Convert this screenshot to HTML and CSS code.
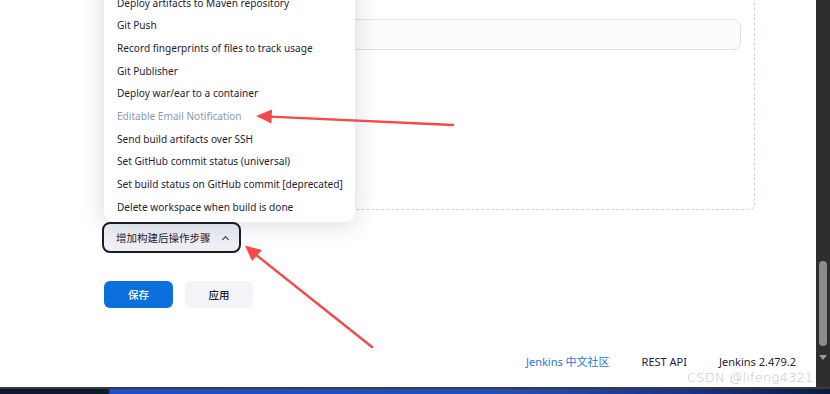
FILE: index.html
```html
<!DOCTYPE html>
<html lang="zh-CN">
<head>
    <meta charset="UTF-8">
    <meta name="viewport" content="width=device-width, initial-scale=1.0">
    <title>Jenkins - 构建后操作</title>
    <link rel="stylesheet" href="styles.css">
</head>
<body>
<div class="screen">
    <div class="window">
        <div class="page">

            <div class="post-build">
                <div class="field"></div>
            </div>

            <button class="add-step">增加构建后操作步骤 <span class="chevron"></span></button>

            <div class="actions">
                <button class="btn btn-primary">保存</button>
                <button class="btn btn-secondary">应用</button>
            </div>

            <footer class="page-footer">
                <a href="#" class="footer-link">Jenkins 中文社区</a>
                <span>REST API</span>
                <span>Jenkins 2.479.2</span>
            </footer>

            <!-- dropdown opened from the add button -->
            <ul class="menu">
                <li>Archive the artifacts</li>
                <li>Deploy artifacts to Maven repository</li>
                <li>Git Push</li>
                <li>Record fingerprints of files to track usage</li>
                <li>Git Publisher</li>
                <li>Deploy war/ear to a container</li>
                <li class="muted">Editable Email Notification</li>
                <li>Send build artifacts over SSH</li>
                <li>Set GitHub commit status (universal)</li>
                <li>Set build status on GitHub commit [deprecated]</li>
                <li>Delete workspace when build is done</li>
            </ul>

            <!-- annotation arrows -->
            <svg class="annotations" width="816" height="387" viewBox="0 0 816 387">
                <line x1="453" y1="125" x2="270" y2="116.6" stroke="#f44a4a" stroke-width="2.4" stroke-linecap="round"/>
                <polygon points="256,116 272,109.5 271.5,123.5" fill="#f44a4a"/>
                <line x1="372" y1="347" x2="255" y2="254" stroke="#f44a4a" stroke-width="2.4" stroke-linecap="round"/>
                <polygon points="245,245.5 262,250 252,261" fill="#f44a4a"/>
            </svg>

            <div class="watermark">CSDN @lifeng4321</div>
        </div>

        <div class="scrollbar">
            <div class="thumb"></div>
            <div class="arrow-down"></div>
        </div>
    </div>
    <div class="taskbar"></div>
</div>
</body>
</html>
```

FILE: styles.css
```css
body {
    margin: 0;
    padding: 0;
    font-family: 'Noto Sans', 'Noto Sans CJK SC', sans-serif;
    color: #1f2330;
    background-color: #fff;
}

.screen {
    width: 830px;
    height: 394px;
    display: flex;
    flex-direction: column;
    overflow: hidden;
}

.window {
    height: 387px;
    display: flex;
}

.page {
    position: relative;
    flex: 1;
    display: flex;
    flex-direction: column;
    align-items: flex-start;
    padding-left: 104px;
    background-color: #fff;
    overflow: hidden;
}

.post-build {
    box-sizing: border-box;
    width: 651px;
    height: 230px;
    margin-top: -20px;
    padding: 38px 13px 0 13px;
    border: 1px dashed #ccd4e2;
    border-radius: 6px;
}

.field {
    height: 31px;
    box-sizing: border-box;
    border: 1.5px solid #dde2eb;
    border-radius: 8px;
    background-color: #fcfcfd;
}

.add-step {
    margin: 12px 0 0 -2px;
    width: 139px;
    height: 31px;
    box-sizing: border-box;
    border: 2px solid #1c1d2b;
    border-radius: 8px;
    background-color: #eef0f5;
    color: #1f2330;
    font-family: inherit;
    font-size: 10.5px;
    padding: 0 0 0 12px;
    display: flex;
    align-items: center;
    gap: 9px;
}

.chevron {
    width: 4px;
    height: 4px;
    border-left: 1.5px solid #333;
    border-top: 1.5px solid #333;
    transform: rotate(45deg);
    margin-top: 3px;
    margin-left: 3px;
}

.actions {
    display: flex;
    gap: 12px;
    margin-top: 28px;
}

.btn {
    height: 27px;
    border: none;
    border-radius: 6px;
    font-family: inherit;
    font-size: 10.5px;
    font-weight: 500;
}

.btn-primary {
    width: 69px;
    background-color: #0b6fde;
    color: #fff;
}

.btn-secondary {
    width: 68px;
    background-color: #f3f4f7;
    color: #1f2330;
}

.page-footer {
    margin-top: auto;
    align-self: flex-end;
    display: flex;
    gap: 32px;
    padding: 0 20px 18px 0;
    font-size: 11px;
    line-height: 15px;
}

.footer-link {
    color: #1f78d6;
    text-decoration: none;
}

.menu {
    position: absolute;
    left: 104px;
    top: -35px;
    width: 251px;
    margin: 0;
    padding: 4px 0;
    list-style: none;
    background-color: #fff;
    border-radius: 10px;
    box-shadow: 0 2px 24px rgba(20, 25, 45, 0.17);
    font-size: 10.1px;
}

.menu li {
    height: 22.67px;
    line-height: 22.67px;
    padding-left: 13px;
    white-space: nowrap;
}

.menu li.muted {
    color: #8a9ab6;
}

.annotations {
    position: absolute;
    left: 0;
    top: 0;
    pointer-events: none;
}

.watermark {
    position: absolute;
    left: 687px;
    top: 370px;
    font-family: 'DejaVu Sans', sans-serif;
    font-weight: 200;
    font-size: 13px;
    line-height: 16px;
    color: #c4c4c4;
    letter-spacing: 0.2px;
    white-space: nowrap;
}

.scrollbar {
    width: 14px;
    background-color: #2e2e2e;
    display: flex;
    flex-direction: column;
    align-items: center;
}

.thumb {
    width: 8px;
    height: 85px;
    margin-top: 261px;
    border-radius: 4px;
    background-color: #8c8c8c;
}

.arrow-down {
    margin-top: 9px;
    width: 0;
    height: 0;
    border-left: 4px solid transparent;
    border-right: 4px solid transparent;
    border-top: 5px solid #9a9a9a;
}

.taskbar {
    height: 7px;
    border-top: 2px solid #3a3a3c;
    box-sizing: border-box;
    background: linear-gradient(90deg, #0d1a2c 0, #0d1a2c 108px, #1d4fc4 110px, #2250b8 60%, #1a2f80 85%, #0c1a40 100%);
}
```
